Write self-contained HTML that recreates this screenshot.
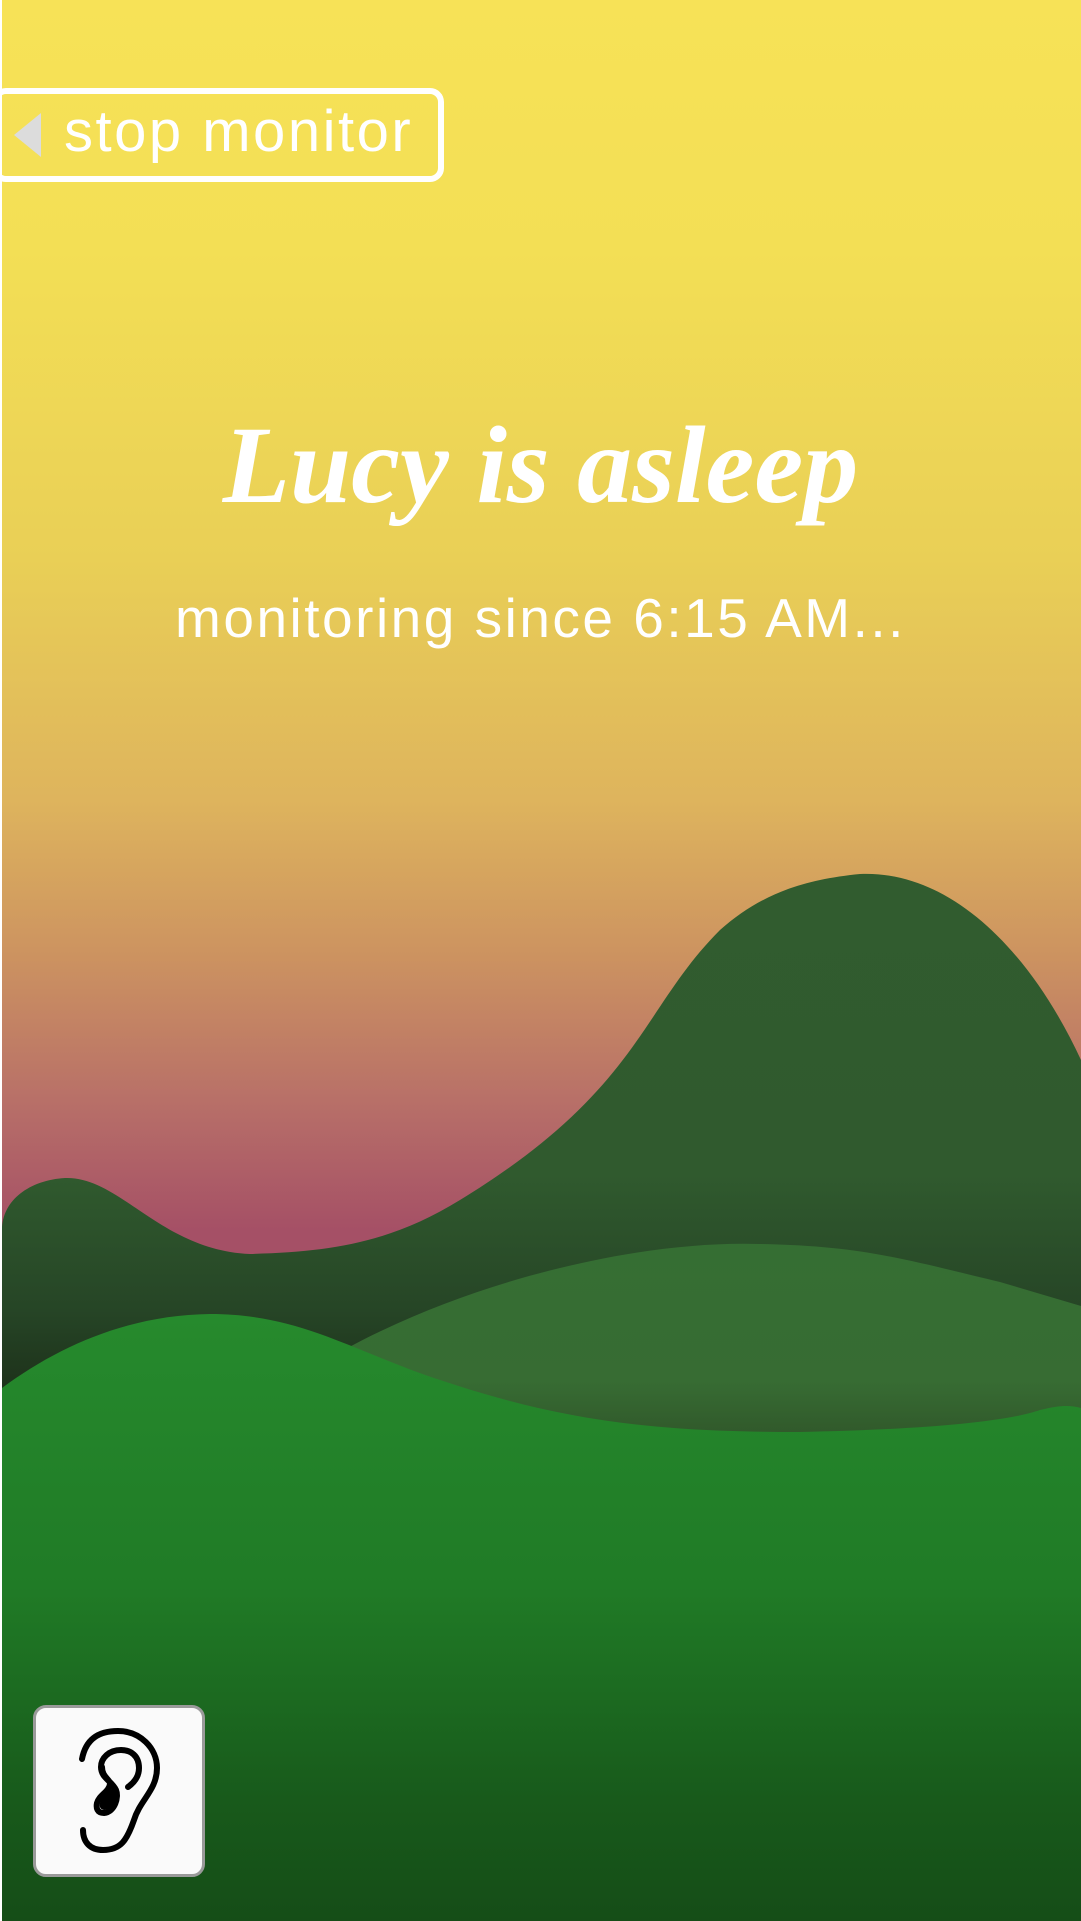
<!DOCTYPE html>
<html><head><meta charset="utf-8"><style>
html,body{margin:0;padding:0;width:1081px;height:1921px;overflow:hidden;}
body{position:relative;background:linear-gradient(to bottom,#f7e257 0px,#f3df55 250px,#e9cf56 560px,#deb45d 800px,#cd9460 950px,#b87068 1100px,#a55066 1230px,#a55066 1300px);font-family:"Liberation Sans",sans-serif;}
#btn{position:absolute;left:-8px;top:88px;width:452px;height:94px;border:6px solid #fff;border-radius:14px;box-sizing:border-box;}
#tri{position:absolute;left:14px;top:113px;width:0;height:0;border-top:22px solid transparent;border-bottom:22px solid transparent;border-right:27px solid #dcdcdc;}
#btxt{position:absolute;left:64px;top:100px;font-size:58px;letter-spacing:2.5px;color:#fff;line-height:64px;}
#title{position:absolute;left:0;width:1081px;top:400px;text-align:center;font-family:"Liberation Serif",serif;font-style:italic;font-weight:bold;font-size:110px;color:#fff;line-height:130px;}
#sub{position:absolute;left:0;width:1081px;top:586px;text-align:center;font-size:55px;letter-spacing:2.5px;color:#fff;line-height:64px;}
svg{position:absolute;left:0;top:0;}
#ear{position:absolute;left:33px;top:1705px;width:172px;height:172px;box-sizing:border-box;background:#fafafa;border:3px solid #9a9a9a;border-radius:13px;}
</style></head><body>
<svg width="1081" height="1921" viewBox="0 0 1081 1921">
<defs>
<linearGradient id="g1" x1="0" y1="0" x2="0" y2="1"><stop offset="0" stop-color="#315c2f"/><stop offset="0.55" stop-color="#305a2e"/><stop offset="0.8" stop-color="#264526"/><stop offset="1" stop-color="#1a2a16"/></linearGradient>
<linearGradient id="g2" x1="0" y1="0" x2="0" y2="1"><stop offset="0" stop-color="#356e33"/><stop offset="0.7" stop-color="#376c33"/><stop offset="1" stop-color="#30572a"/></linearGradient>
<linearGradient id="g3" x1="0" y1="0" x2="0" y2="1"><stop offset="0" stop-color="#268a2d"/><stop offset="0.45" stop-color="#207b26"/><stop offset="0.8" stop-color="#185a1b"/><stop offset="1" stop-color="#154d17"/></linearGradient>
</defs>
<path d="M2 1230 C2 1200 30 1180 65 1178 C120 1176 160 1250 250 1254 C330 1252 390 1243 460 1200 C640 1090 640 1010 720 930 C760 895 800 880 860 874 C950 870 1030 950 1081 1060 L1081 1420 L2 1420 Z" fill="url(#g1)"/>
<path d="M340 1352 C470 1280 640 1240 760 1244 C860 1246 900 1258 1000 1282 L1081 1306 L1081 1440 L340 1440 Z" fill="url(#g2)"/>
<path d="M2 1388 C60 1345 130 1315 210 1314 C300 1314 350 1350 440 1380 C560 1420 650 1432 800 1432 C900 1430 1000 1424 1040 1410 C1060 1405 1070 1405 1081 1408 L1081 1921 L2 1921 Z" fill="url(#g3)"/>
<rect x="0" y="0" width="2" height="1921" fill="#fff"/>
</svg>
<div id="btn"></div><div id="tri"></div>
<div id="btxt">stop monitor</div>
<div id="title">Lucy is asleep</div>
<div id="sub">monitoring since 6:15 AM...</div>
<div id="ear"><svg width="172" height="172" viewBox="33 1705 172 172" style="left:-3px;top:-3px">
<path d="M82 1759 C86 1738 100 1731 118 1731 C140 1731 157 1748 157 1768 C157 1790 140 1800 134 1820 C127 1840 121 1850 103 1850 C90 1850 83 1842 83 1830" fill="none" stroke="#000" stroke-width="6" stroke-linecap="round"/>
<path d="M128 1787 C135 1782 139 1776 139 1768 C139 1756 131 1750 121 1750 C109 1750 101 1758 101 1767 C101 1778 112 1781 116 1790 C119 1797 115 1812 104 1813 C97 1813 96 1808 97 1803 C99 1795 109 1792 110 1784 C110 1779 102 1777 102 1767" fill="none" stroke="#000" stroke-width="6" stroke-linecap="round"/>
<path d="M113 1786 C118 1795 115 1808 105 1810 C100 1810 99 1806 100 1803 C102 1796 110 1793 113 1786 Z" fill="#000"/>
</svg></div>
</body></html>
